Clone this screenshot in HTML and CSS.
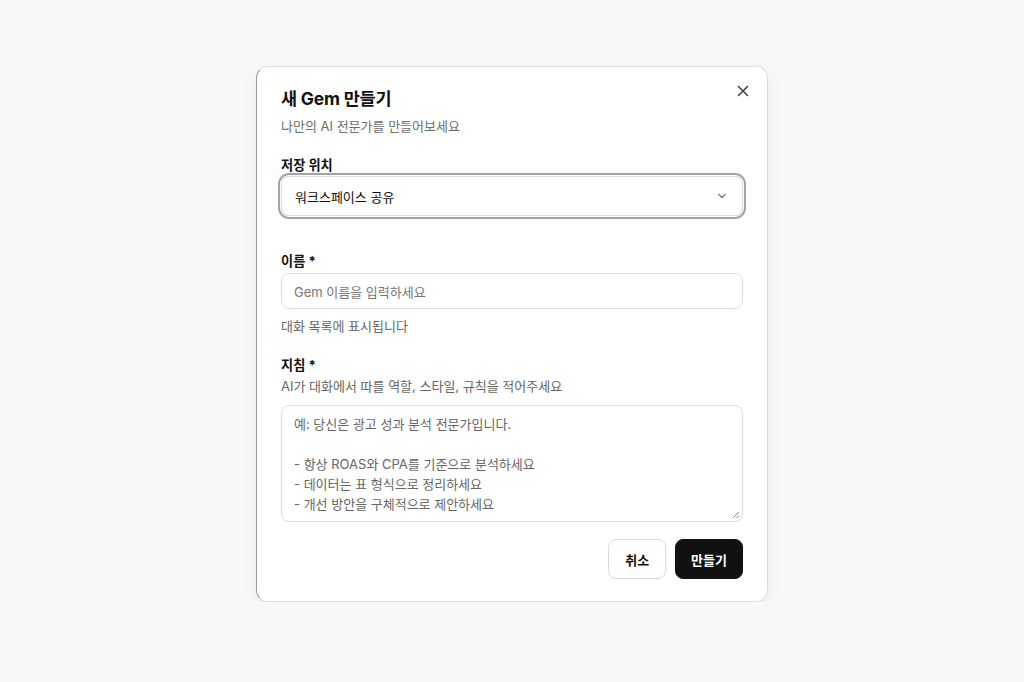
FILE: index.html
```html
<!DOCTYPE html>
<html lang="ko">
<head>
<meta charset="utf-8">
<title>새 Gem 만들기</title>
<link rel="stylesheet" href="styles.css">
</head>
<body>
<div class="dialog">
  <button class="close" aria-label="닫기">
    <svg width="14" height="14" viewBox="0 0 14 14"><path d="M2.5 2.5 L11.5 11.5 M11.5 2.5 L2.5 11.5" stroke="#444" stroke-width="1.6" stroke-linecap="round" fill="none"/></svg>
  </button>
  <div class="header">
    <h2 class="title">새 Gem 만들기</h2>
    <p class="subtitle">나만의 AI 전문가를 만들어보세요</p>
  </div>

  <div class="field field-location">
    <label class="label">저장 위치</label>
    <div class="select">
      <span>워크스페이스 공유</span>
      <svg width="12" height="12" viewBox="0 0 12 12"><path d="M2.8 4.4 L6 7.6 L9.2 4.4" stroke="#666" stroke-width="1.3" fill="none" stroke-linecap="round" stroke-linejoin="round"/></svg>
    </div>
  </div>

  <div class="field field-name">
    <label class="label">이름 *</label>
    <div class="input">Gem 이름을 입력하세요</div>
    <p class="help">대화 목록에 표시됩니다</p>
  </div>

  <div class="field field-guide">
    <label class="label">지침 *</label>
    <p class="desc">AI가 대화에서 따를 역할, 스타일, 규칙을 적어주세요</p>
    <div class="textarea">
      <div>예: 당신은 광고 성과 분석 전문가입니다.</div>
      <div>&nbsp;</div>
      <div>- 항상 ROAS와 CPA를 기준으로 분석하세요</div>
      <div>- 데이터는 표 형식으로 정리하세요</div>
      <div>- 개선 방안을 구체적으로 제안하세요</div>
      <svg class="grip" width="8" height="8" viewBox="0 0 8 8"><path d="M7 1 L1 7 M7 4.5 L4.5 7" stroke="#888" stroke-width="1" fill="none"/></svg>
    </div>
  </div>

  <div class="actions">
    <button class="btn btn-cancel">취소</button>
    <button class="btn btn-primary">만들기</button>
  </div>
</div>
</body>
</html>
```

FILE: styles.css
```css
* { box-sizing: border-box; }
html, body {
  margin: 0;
  padding: 0;
  background: #f9f8f6;
  font-family: Inter, "Noto Sans CJK KR", sans-serif;
  color: #111;
}
.dialog {
  position: relative;
  width: 512px;
  margin: 66px auto 0;
  background: #fff;
  border: 1px solid #dcdcdc;
  border-left-color: #9a9a9a;
  border-radius: 12px;
  box-shadow: 0 4px 16px rgba(0,0,0,0.05);
  padding: 23px 24px 22px;
  display: flex;
  flex-direction: column;
}
.close {
  position: absolute;
  top: 17px;
  right: 17px;
  width: 14px;
  height: 14px;
  padding: 0;
  border: 0;
  background: none;
  display: flex;
}
.title {
  margin: 0;
  font-size: 17.5px;
  line-height: 18px;
  font-weight: 700;
  letter-spacing: -0.2px;
}
.subtitle {
  margin: 8px 0 0;
  font-size: 13px;
  line-height: 20px;
  color: #6e6e6e;
}
.field { display: flex; flex-direction: column; }
.field-location { margin-top: 19px; }
.field-name { margin-top: 35px; }
.field-guide { margin-top: 19px; }
.label {
  font-size: 13.2px;
  line-height: 20px;
  font-weight: 700;
}
.select {
  margin-top: 1px;
  height: 40px;
  border: 1px solid #dedede;
  border-radius: 8px;
  box-shadow: 0 0 0 1px #fff, 0 0 0 3px #a3a3a3;
  padding: 0 14px 0 13px;
  display: flex;
  align-items: center;
  justify-content: space-between;
  font-size: 13px;
}
.input {
  margin-top: 2px;
  height: 36px;
  border: 1px solid #dedede;
  border-radius: 8px;
  padding: 0 12px;
  display: flex;
  align-items: center;
  font-size: 13px;
  color: #777;
}
.help {
  margin: 7px 0 0;
  font-size: 13px;
  line-height: 20px;
  color: #666;
}
.desc {
  margin: 1px 0 0;
  font-size: 13px;
  line-height: 20px;
  color: #666;
}
.textarea {
  position: relative;
  margin-top: 9px;
  height: 117px;
  border: 1px solid #dedede;
  border-radius: 8px;
  padding: 8px 12px;
  font-size: 13px;
  line-height: 20px;
  color: #666;
}
.grip {
  position: absolute;
  right: 2px;
  bottom: 2px;
}
.actions {
  margin-top: 17px;
  display: flex;
  justify-content: flex-end;
  gap: 9px;
}
.btn {
  height: 40px;
  border-radius: 8px;
  font-family: inherit;
  font-size: 13px;
  font-weight: 700;
  padding: 0 15px;
  white-space: nowrap;
}
.btn-cancel {
  background: #fff;
  border: 1px solid #dadada;
  color: #111;
  padding: 0 16px;
}
.btn-primary {
  background: #111;
  border: 1px solid #111;
  color: #fff;
}
```
